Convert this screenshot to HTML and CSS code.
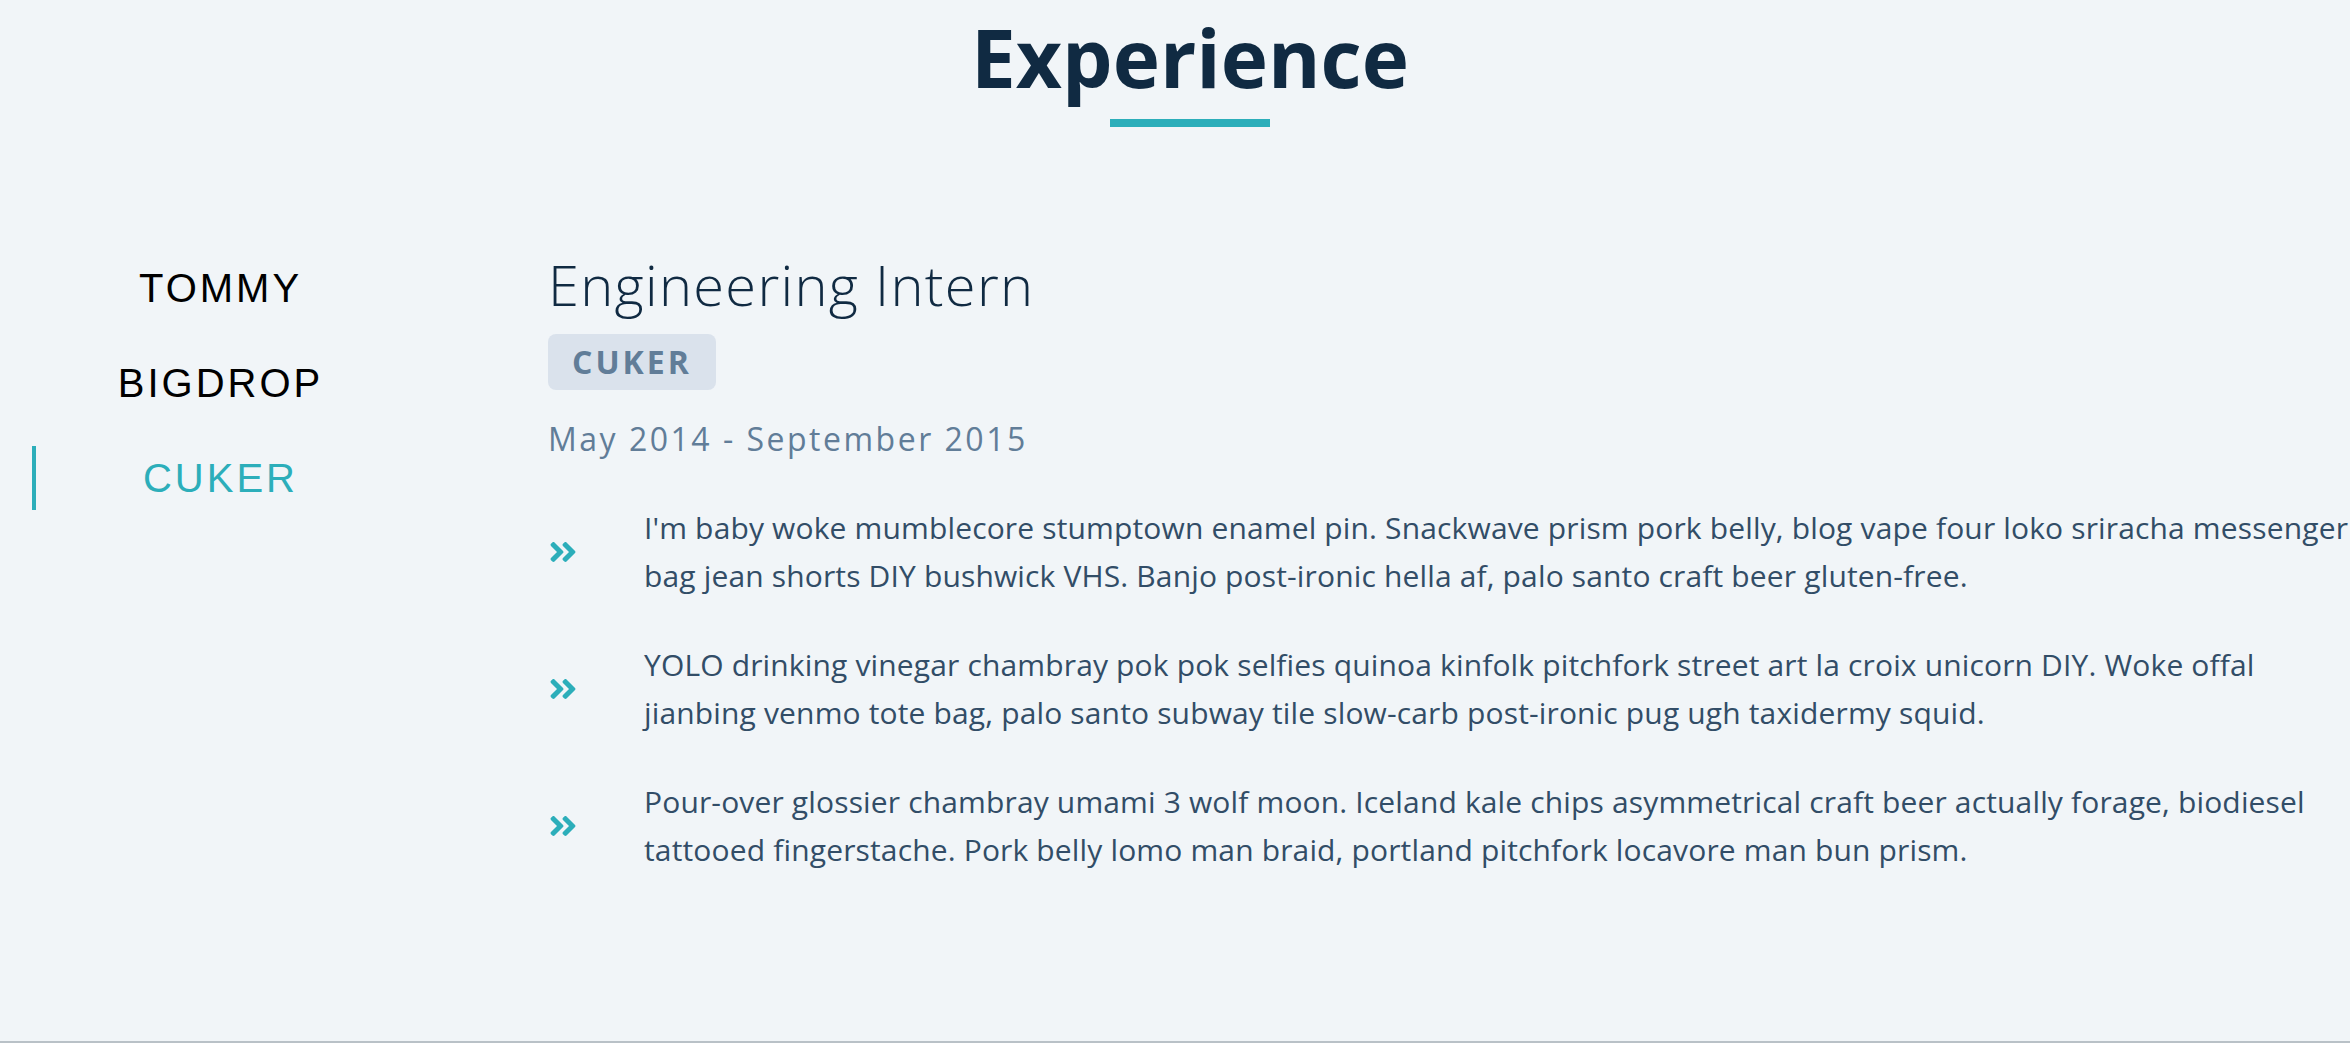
FILE: index.html
```html
<!DOCTYPE html>
<html lang="en">
<head>
<meta charset="utf-8">
<title>Experience</title>
<link rel="stylesheet" href="styles.css">
</head>
<body>
<section class="section">
  <div class="title">
    <h2>Experience</h2>
    <div class="underline"></div>
  </div>
  <div class="jobs-center">
    <div class="btn-container">
      <button class="job-btn">TOMMY</button>
      <button class="job-btn">BIGDROP</button>
      <button class="job-btn active-btn">CUKER</button>
    </div>
    <article class="job-info">
      <h3>Engineering Intern</h3>
      <h4>cuker</h4>
      <p class="job-date">May 2014 - September 2015</p>
      <div class="job-desc">
        <svg class="job-icon" viewBox="0 0 448 512" aria-hidden="true"><path fill="currentColor" d="M224.3 273l-136 136c-9.4 9.4-24.6 9.4-33.9 0l-22.6-22.6c-9.4-9.4-9.4-24.6 0-33.9l96.4-96.4-96.4-96.4c-9.4-9.4-9.4-24.6 0-33.9L54.3 103c9.4-9.4 24.6-9.4 33.9 0l136 136c9.5 9.4 9.5 24.6.1 34zm192-34l-136-136c-9.4-9.4-24.6-9.4-33.9 0l-22.6 22.6c-9.4 9.4-9.4 24.6 0 33.9l96.4 96.4-96.4 96.4c-9.4 9.4-9.4 24.6 0 33.9l22.6 22.6c9.4 9.4 24.6 9.4 33.9 0l136-136c9.4-9.2 9.4-24.4 0-33.8z"/></svg>
        <p>I'm baby woke mumblecore stumptown enamel pin. Snackwave prism pork belly, blog vape four loko sriracha messenger bag jean shorts DIY bushwick VHS. Banjo post-ironic hella af, palo santo craft beer gluten-free.</p>
      </div>
      <div class="job-desc">
        <svg class="job-icon" viewBox="0 0 448 512" aria-hidden="true"><path fill="currentColor" d="M224.3 273l-136 136c-9.4 9.4-24.6 9.4-33.9 0l-22.6-22.6c-9.4-9.4-9.4-24.6 0-33.9l96.4-96.4-96.4-96.4c-9.4-9.4-9.4-24.6 0-33.9L54.3 103c9.4-9.4 24.6-9.4 33.9 0l136 136c9.5 9.4 9.5 24.6.1 34zm192-34l-136-136c-9.4-9.4-24.6-9.4-33.9 0l-22.6 22.6c-9.4 9.4-9.4 24.6 0 33.9l96.4 96.4-96.4 96.4c-9.4 9.4-9.4 24.6 0 33.9l22.6 22.6c9.4 9.4 24.6 9.4 33.9 0l136-136c9.4-9.2 9.4-24.4 0-33.8z"/></svg>
        <p>YOLO drinking vinegar chambray pok pok selfies quinoa kinfolk pitchfork street art la croix unicorn DIY. Woke offal jianbing venmo tote bag, palo santo subway tile slow-carb post-ironic pug ugh taxidermy squid.</p>
      </div>
      <div class="job-desc">
        <svg class="job-icon" viewBox="0 0 448 512" aria-hidden="true"><path fill="currentColor" d="M224.3 273l-136 136c-9.4 9.4-24.6 9.4-33.9 0l-22.6-22.6c-9.4-9.4-9.4-24.6 0-33.9l96.4-96.4-96.4-96.4c-9.4-9.4-9.4-24.6 0-33.9L54.3 103c9.4-9.4 24.6-9.4 33.9 0l136 136c9.5 9.4 9.5 24.6.1 34zm192-34l-136-136c-9.4-9.4-24.6-9.4-33.9 0l-22.6 22.6c-9.4 9.4-9.4 24.6 0 33.9l96.4 96.4-96.4 96.4c-9.4 9.4-9.4 24.6 0 33.9l22.6 22.6c9.4 9.4 24.6 9.4 33.9 0l136-136c9.4-9.2 9.4-24.4 0-33.8z"/></svg>
        <p>Pour-over glossier chambray umami 3 wolf moon. Iceland kale chips asymmetrical craft beer actually forage, biodiesel tattooed fingerstache. Pork belly lomo man braid, portland pitchfork locavore man bun prism.</p>
      </div>
    </article>
  </div>
</section>
</body>
</html>
```
FILE: styles.css
```css
* {
  margin: 0;
  padding: 0;
  box-sizing: border-box;
}

html,
body {
  overflow-x: hidden;
}

body {
  background: #f1f5f8;
  color: #102a42;
  font-family: "Open Sans", "Noto Sans", sans-serif;
  min-height: 1043px;
  border-bottom: 2px solid #b9c1c7;
}

.section {
  width: 2380px;
  padding: 17px 16px 0;
}

.title {
  text-align: center;
}

.title h2 {
  font-size: 80px;
  font-weight: 700;
  line-height: 1;
  letter-spacing: 0;
  margin-bottom: 22px;
}

.underline {
  width: 160px;
  height: 8px;
  margin: 0 auto;
  background: #2caeba;
}

.jobs-center {
  display: grid;
  grid-template-columns: 404px 1fr;
  column-gap: 128px;
  margin-top: 129px;
}

.btn-container {
  display: flex;
  flex-direction: column;
  gap: 31px;
}

.job-btn {
  background: transparent;
  border: 0;
  margin: 0 16px;
  padding: 12px 0 12px 5px;
  font-family: "Liberation Sans", Arial, sans-serif;
  font-size: 40px;
  line-height: 40px;
  letter-spacing: 3px;
  color: #000;
  cursor: pointer;
}

.active-btn {
  color: #2caeba;
  box-shadow: inset 4px 0 0 #2caeba;
}

.job-info h3 {
  font-size: 56px;
  font-weight: 300;
  line-height: 1;
  letter-spacing: 1.3px;
  color: #102a42;
  margin-bottom: 22px;
}

.job-info h4 {
  width: fit-content;
  text-transform: uppercase;
  font-size: 32px;
  font-weight: 700;
  line-height: 1;
  letter-spacing: 3px;
  color: #617d98;
  background: #dae2ec;
  padding: 12px 24px;
  border-radius: 8px;
  margin-bottom: 25px;
}

.job-date {
  font-size: 32px;
  line-height: 48px;
  letter-spacing: 2.5px;
  color: #617d98;
  margin-bottom: 40px;
}

.job-desc {
  display: grid;
  grid-template-columns: auto 1fr;
  column-gap: 67px;
  align-items: center;
  margin-bottom: 40px;
}

.job-icon {
  display: block;
  width: 28px;
  height: 32px;
  margin-left: 1px;
  color: #2caeba;
}

.job-desc p {
  padding-top: 1px;
  font-size: 30px;
  line-height: 48px;
  letter-spacing: 0.15px;
  color: #324d67;
}
```
